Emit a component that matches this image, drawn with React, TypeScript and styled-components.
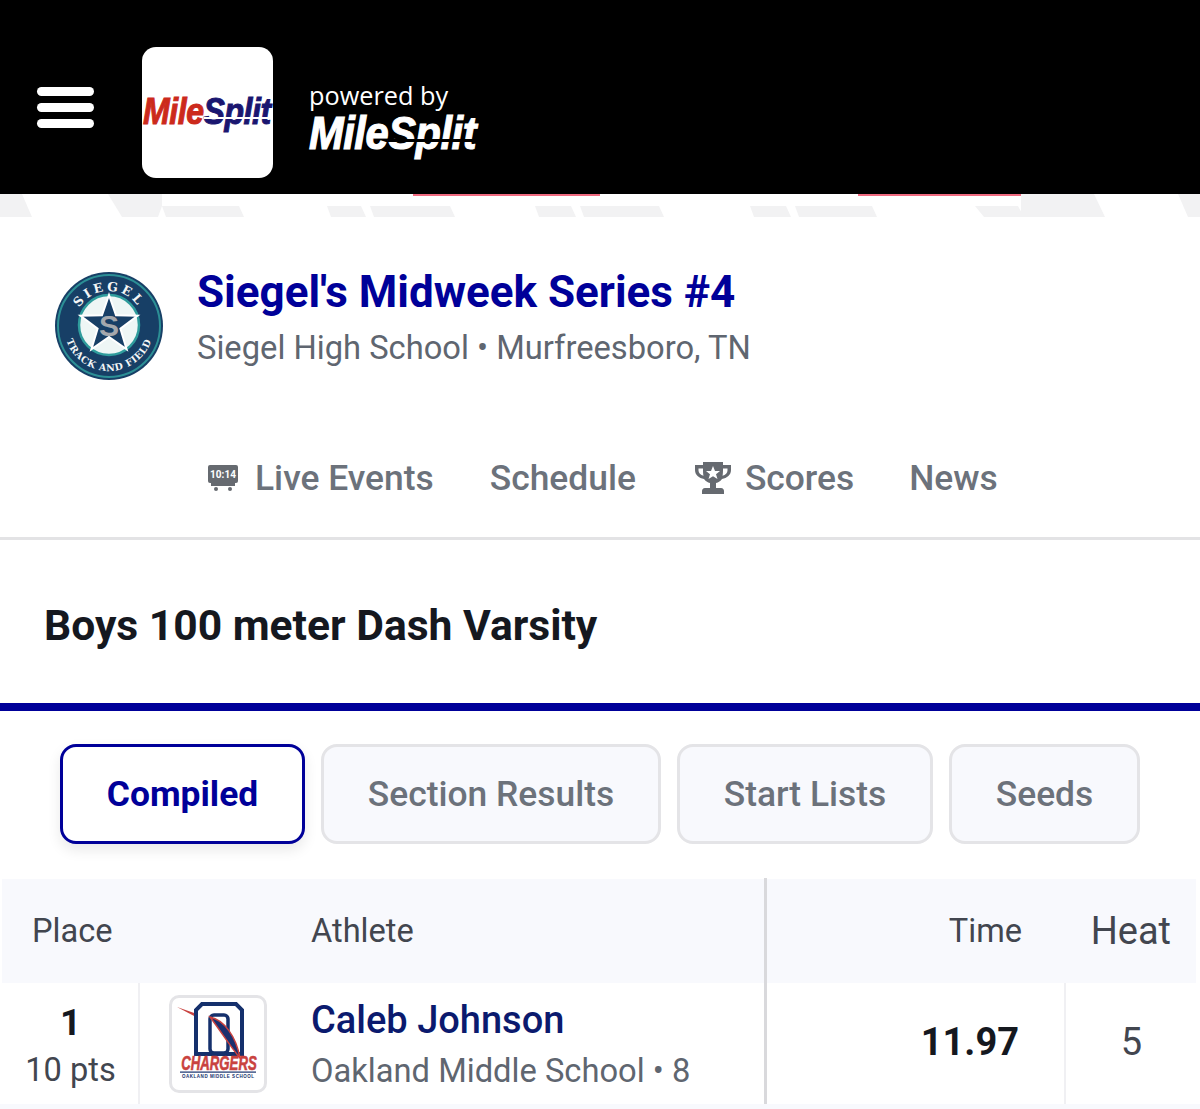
import React from "react";
import styled, { createGlobalStyle } from "styled-components";

const Global = createGlobalStyle`
  html, body { margin: 0; padding: 0; background: #fff; }
  body { font-family: Roboto, "Liberation Sans", sans-serif; width: 1200px; height: 1109px; overflow: hidden; }
  * { box-sizing: border-box; }
`;
const Page = styled.div`width: 1200px; height: 1109px; overflow: hidden; background: #fff;`;
const Header = styled.header`height: 194px; background: #000; display: flex; align-items: center; padding: 30px 0 0 37px;`;
const Burger = styled.div`width: 57px; height: 41px; margin-top: -10px; display: flex; flex-direction: column; justify-content: space-between; margin-right: 48px;`;
const BurgerBar = styled.span`display: block; height: 9px; border-radius: 5px; background: #fff;`;
const LogoTile = styled.div`width: 131px; height: 131px; border-radius: 14px; background: #fff; display: flex; align-items: center; padding-left: 1px; margin-right: 36px; overflow: hidden;`;
const Brand = styled.span<{ $size: number; $squeeze: number }>`
  font-family: "Liberation Sans", Arial, sans-serif; font-weight: 700; font-style: italic;
  font-size: ${p => p.$size}px; letter-spacing: -0.5px; line-height: 1; white-space: nowrap; display: inline-block;
  transform: scaleX(${p => p.$squeeze}); transform-origin: left center;
`;
const Red = styled.span`color: #cc2a1c; -webkit-text-stroke: 1px #cc2a1c;`;
const Split = styled.span<{ $ink: string; $cut: string; $cutH: number }>`
  position: relative; display: inline-block;
  color: ${p => p.$ink}; -webkit-text-stroke: 1px ${p => p.$ink};
  &::after {
    content: ""; position: absolute; left: 0; right: 0; top: 63%;
    height: ${p => p.$cutH}px; background: ${p => p.$cut};
  }
`;
const Powered = styled.div`display: flex; flex-direction: column; color: #fff; margin-top: 12px; width: 190px;`;
const PoweredText = styled.span`font-family: "Open Sans", sans-serif; font-size: 25.3px; line-height: 30px; font-weight: 400;`;
const PoweredBrand = styled(Brand)`color: #fff; -webkit-text-stroke: 1.2px #fff; margin-top: 0;`;
const Band = styled.svg`display: block; width: 1200px; height: 23px;`;
const EventRow = styled.section`display: flex; align-items: center; padding: 55px 0 0 55px; height: 163px;`;
const EventLogo = styled.svg`width: 108px; height: 108px; flex: none; margin-right: 34px;`;
const EventText = styled.div`display: flex; flex-direction: column; margin-bottom: 18px;`;
const EventTitle = styled.h1`margin: 0; font-size: 44px; line-height: 52px; font-weight: 700; color: #000099; white-space: nowrap;`;
const EventSub = styled.p`margin: 10px 0 0; font-size: 32.7px; line-height: 40px; color: #5f6670; white-space: nowrap;`;
const Nav = styled.nav`height: 160px; padding: 76px 0 0 207px; display: flex; align-items: flex-start; border-bottom: 3px solid #e3e3e5;`;
const NavItem = styled.div<{ $gap: number }>`display: flex; align-items: center; height: 44px; margin-right: ${p => p.$gap}px; font-size: 35.4px; font-weight: 500; color: #6c727b; white-space: nowrap;`;
const NavIcon = styled.svg<{ $gap: number }>`flex: none; margin-right: ${p => p.$gap}px;`;
const TitleRow = styled.div`height: 171px; padding: 0 0 0 44px; display: flex; align-items: center; border-bottom: 8px solid #000099;`;
const EventName = styled.h2`margin: 7px 0 0; font-size: 42.6px; font-weight: 700; color: #15181f; white-space: nowrap;`;
const Tabs = styled.div`height: 168px; padding: 33px 0 0 60px; display: flex; align-items: flex-start; gap: 16px;`;
const Tab = styled.div<{ $w: number; $active?: boolean }>`
  width: ${p => p.$w}px; height: 100px; border-radius: 16px; display: flex; align-items: center; justify-content: center;
  font-size: 35.4px; font-weight: ${p => (p.$active ? 700 : 500)};
  color: ${p => (p.$active ? "#000099" : "#6c727b")};
  background: ${p => (p.$active ? "#fff" : "#f8f9fd")};
  border: ${p => (p.$active ? "3px solid #000099" : "3px solid #e4e4e7")};
  box-shadow: ${p => (p.$active ? "0 6px 14px rgba(0,0,0,0.09)" : "none")};
`;
const HeadRow = styled.div`display: grid; height: 104px; background: #f8f9fd; margin: 0 4px 0 2px; grid-template-columns: 138px 171px 456px 299px 130px;`;
const HeadCell = styled.div<{ $big?: boolean; $right?: boolean; $divide?: boolean; $end?: boolean }>`
  display: flex; align-items: center; justify-content: ${p => (p.$right ? "flex-end" : "flex-start")};
  font-size: ${p => (p.$big ? 38 : 32.6)}px; color: #42464f;
  padding-right: ${p => (p.$right ? (p.$end ? 25 : 44) : 0)}px;
  padding-left: ${p => (p.$right || p.$divide ? 0 : 30)}px;
  margin-top: -1px;
  white-space: nowrap;
  border-right: ${p => (p.$divide ? "3px solid #d9d9dc" : "none")};
`;
const BodyRow = styled.div`display: grid; height: 121px; grid-template-columns: 140px 171px 456px 299px 134px;`;
const PlaceCell = styled.div`display: flex; flex-direction: column; align-items: center; justify-content: center; padding-left: 3px; border-right: 2px solid #f0f0f3;`;
const PlaceNum = styled.span`font-size: 37px; line-height: 46px; font-weight: 700; color: #15181f; margin-top: 2px;`;
const Pts = styled.span`font-size: 32.6px; line-height: 40px; color: #42464f; margin-top: 4px;`;
const LogoCell = styled.div`display: flex; align-items: center; padding-left: 29px;`;
const TeamTile = styled.div`width: 98px; height: 98px; border: 3px solid #e4e4e7; border-radius: 10px; background: #fff; overflow: hidden; display: flex; align-items: center; justify-content: center;`;
const AthleteCell = styled.div`display: flex; flex-direction: column; justify-content: center; border-right: 3px solid #d9d9dc;`;
const AthleteName = styled.span`font-size: 38px; line-height: 46px; font-weight: 500; color: #0b1a6e; white-space: nowrap;`;
const School = styled.span`font-size: 32.7px; line-height: 40px; color: #5f6670; margin-top: 8px; white-space: nowrap;`;
const TimeCell = styled.div`display: flex; align-items: center; justify-content: flex-end; padding: 0 45px 4px 0; font-size: 38px; font-weight: 700; color: #15181f; border-right: 2px solid #f0f0f3;`;
const HeatCell = styled.div`display: flex; align-items: center; justify-content: center; padding: 0 3px 4px 0; font-size: 38px; color: #42464f;`;
const NextRow = styled.div`height: 6px; background: #f8f9fd;`;

const Sweep = ({ x, w }: { x: number; w: number }) => (
  <polygon points={`${x},12 ${x + w - 5},12 ${x + w},23 ${x + 4},23`} fill="#f2f2f3" />
);

export default function App() {
  return (
    <Page>
      <Global />
      <Header>
        <Burger><BurgerBar /><BurgerBar /><BurgerBar /></Burger>
        <LogoTile>
          <Brand $size={36} $squeeze={0.89}>
            <Red>Mile</Red>
            <Split $ink="#1a1670" $cut="#fff" $cutH={2}>Split</Split>
          </Brand>
        </LogoTile>
        <Powered>
          <PoweredText>powered by</PoweredText>
          <PoweredBrand $size={46} $squeeze={0.905}>
            Mile<Split $ink="#fff" $cut="#000" $cutH={3}>Split</Split>
          </PoweredBrand>
        </Powered>
      </Header>
      <Band viewBox="0 0 1200 23">
        <rect x="413" y="0" width="187" height="2" fill="#f06a80" />
        <rect x="858" y="0" width="165" height="2" fill="#f06a80" />
        <polygon points="0,0 22,0 32,23 0,23" fill="#f2f2f3" />
        <polygon points="108,0 162,0 162,12 158,23 122,23" fill="#f2f2f3" />
        <Sweep x={162} w={82} />
        <Sweep x={327} w={39} />
        <Sweep x={370} w={85} />
        <Sweep x={535} w={41} />
        <Sweep x={580} w={84} />
        <Sweep x={750} w={41} />
        <Sweep x={795} w={82} />
        <polygon points="975,12 1018,12 1024,23 984,23" fill="#f2f2f3" />
        <polygon points="1021,0 1094,0 1105,23 1021,23" fill="#f2f2f3" />
        <polygon points="1178,0 1200,0 1200,23 1188,23" fill="#f2f2f3" />
      </Band>
      <EventRow>
        <EventLogo viewBox="0 0 108 108">
          <circle cx="54" cy="54" r="54" fill="#173f66" />
          <circle cx="54" cy="54" r="51" fill="none" stroke="#2c8f95" strokeWidth="2" />
          <circle cx="54" cy="53" r="30" fill="#eef6f5" stroke="#2f9c9c" strokeWidth="2.5" />
          <polygon
            points="54,23 61,43.3 82.5,43.7 65.4,56.7 71.6,77.3 54,65 36.4,77.3 42.6,56.7 25.5,43.7 47,43.3"
            fill="#173f66" stroke="#fff" strokeWidth="2"
          />
          <text x="54" y="64" textAnchor="middle" fontFamily="Liberation Sans, sans-serif" fontWeight="700" fontSize="30" fill="#a4a8ad">S</text>
          <defs>
            <path id="topArc" d="M 19 54 A 35 35 0 0 1 89 54" />
            <path id="botArc" d="M 9 54 A 45 45 0 0 0 99 54" />
          </defs>
          <text fontFamily="DejaVu Serif, serif" fontWeight="700" fontSize="12.5" fill="#f4f6f6" letterSpacing="3">
            <textPath href="#topArc" startOffset="50%" textAnchor="middle">SIEGEL</textPath>
          </text>
          <text fontFamily="DejaVu Serif, serif" fontWeight="700" fontSize="9.5" fill="#f4f6f6" letterSpacing="0.6">
            <textPath href="#botArc" startOffset="50%" textAnchor="middle">TRACK AND FIELD</textPath>
          </text>
        </EventLogo>
        <EventText>
          <EventTitle>Siegel's Midweek Series #4</EventTitle>
          <EventSub>Siegel High School • Murfreesboro, TN</EventSub>
        </EventText>
      </EventRow>
      <Nav>
        <NavItem $gap={56}>
          <NavIcon $gap={16} width="32" height="26" viewBox="0 0 32 26">
            <rect x="1" y="0" width="30" height="18" rx="2" fill="#666a70" />
            <rect x="4" y="18" width="24" height="3" fill="#666a70" />
            <circle cx="9" cy="24" r="2" fill="#666a70" />
            <circle cx="23" cy="24" r="2" fill="#666a70" />
            <text x="16" y="12.5" textAnchor="middle" fontFamily="Roboto, sans-serif" fontWeight="700" fontSize="10" fill="#fff">10:14</text>
          </NavIcon>
          Live Events
        </NavItem>
        <NavItem $gap={58}>Schedule</NavItem>
        <NavItem $gap={55}>
          <NavIcon $gap={13} width="38" height="34" viewBox="0 0 38 34">
            <path d="M9 1h20v3h8v5c0 5-4 8-9 9-1.500 2-3.500 3.500-6 4v5h5c2 0 3 1.500 3 3v3H8v-3c0-1.500 1-3 3-3h5v-5c-2.500-.5-4.500-2-6-4-5-1-9-4-9-9V4h8zM4.500 7.500v2c0 2.500 2 4.500 5 5.300-.5-2-.5-4.800-.5-7.300zm29 0H29c0 2.500 0 5.300-.5 7.300 3-.8 5-2.800 5-5.300z" fill="#666a70" fillRule="evenodd" />
            <polygon points="19,5 21,10 26,10 22,13.200 23.500,18 19,15.200 14.500,18 16,13.200 12,10 17,10" fill="#fff" />
          </NavIcon>
          Scores
        </NavItem>
        <NavItem $gap={0}>News</NavItem>
      </Nav>
      <TitleRow>
        <EventName>Boys 100 meter Dash Varsity</EventName>
      </TitleRow>
      <Tabs>
        <Tab $w={245} $active>Compiled</Tab>
        <Tab $w={340}>Section Results</Tab>
        <Tab $w={256}>Start Lists</Tab>
        <Tab $w={191}>Seeds</Tab>
      </Tabs>
      <HeadRow>
        <HeadCell>Place</HeadCell>
        <HeadCell />
        <HeadCell $divide>Athlete</HeadCell>
        <HeadCell $right>Time</HeadCell>
        <HeadCell $right $big $end>Heat</HeadCell>
      </HeadRow>
      <BodyRow>
        <PlaceCell>
          <PlaceNum>1</PlaceNum>
          <Pts>10 pts</Pts>
        </PlaceCell>
        <LogoCell>
          <TeamTile>
            <svg width="92" height="92" viewBox="0 0 92 92">
              <path d="M5 9 L25 16 L24 19 Z" fill="#c9423f" />
              <path d="M30 6 H64 L70 12 V56 H24 V12 Z" fill="none" stroke="#15306c" strokeWidth="4" />
              <rect x="38" y="17" width="18" height="38" rx="4" fill="#fff" stroke="#15306c" strokeWidth="3.5" />
              <path d="M38 19 C52 22 64 38 68 60 C58 48 48 32 38 19 Z" fill="#1b2f6e" stroke="#c9423f" strokeWidth="1.500" />
              <text transform="translate(47 72) scale(1 1.55)" textAnchor="middle" fontFamily="Liberation Sans, sans-serif" fontWeight="700" fontStyle="italic" fontSize="13.2" fill="#c9423f" stroke="#c9423f" strokeWidth="0.4">CHARGERS</text>
              <rect x="8" y="73.500" width="76" height="1.200" fill="#15306c" />
              <text x="46" y="80" textAnchor="middle" fontFamily="Liberation Sans, sans-serif" fontWeight="700" fontSize="4.500" fill="#15306c" textLength="72" lengthAdjust="spacing">OAKLAND MIDDLE SCHOOL</text>
            </svg>
          </TeamTile>
        </LogoCell>
        <AthleteCell>
          <AthleteName>Caleb Johnson</AthleteName>
          <School>Oakland Middle School • 8</School>
        </AthleteCell>
        <TimeCell>11.97</TimeCell>
        <HeatCell>5</HeatCell>
      </BodyRow>
      <NextRow />
    </Page>
  );
}
